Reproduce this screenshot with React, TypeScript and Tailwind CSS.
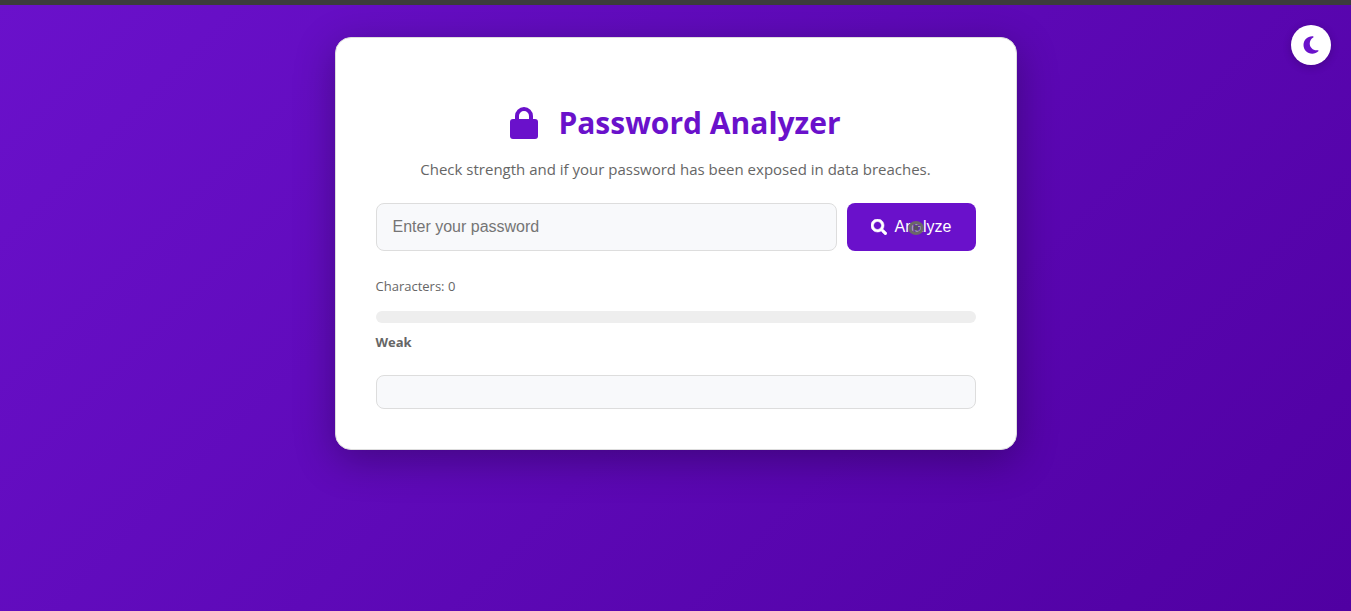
import { useState } from "react";
import { FaSearch } from "react-icons/fa";
import { FaMoon } from "react-icons/fa6";

function LockIcon() {
  return (
    <svg viewBox="0 0 28 32" aria-hidden="true" className="h-8 w-7" fill="currentColor">
      <path d="M7 13V9a7 7 0 0 1 14 0v4" fill="none" stroke="currentColor" strokeWidth="4" />
      <rect x="0" y="12" width="28" height="20" rx="3" />
    </svg>
  );
}

function PointerMark() {
  return (
    <svg
      viewBox="0 0 16 14"
      aria-hidden="true"
      className="pointer-events-none absolute top-[18px] left-[61px] h-[14px] w-4"
    >
      <ellipse cx="8" cy="7" rx="6.4" ry="5.4" fill="#5f5080" fillOpacity="0.55" stroke="#6b6868" strokeWidth="3" />
      <circle cx="8" cy="7" r="2.4" fill="#55505c" />
    </svg>
  );
}

export default function App() {
  const [password, setPassword] = useState("");

  return (
    <div className="flex min-h-screen flex-col bg-[linear-gradient(135deg,#6a11cb,#5000a2)] font-['Open_Sans','Noto_Sans',sans-serif] text-[#666666]">
      <div className="h-[5px] bg-[#3c3c3c]" />
      <button
        type="button"
        aria-label="Toggle dark mode"
        className="fixed top-[25px] right-5 flex size-10 items-center justify-center rounded-full bg-white text-[#6a11cb] shadow-[0_2px_8px_rgba(0,0,0,0.2)]"
      >
        <FaMoon className="h-5 w-4" />
      </button>

      <main className="mx-auto mt-8 w-full max-w-[682px] rounded-2xl border border-[#dddddd] bg-white px-10 pt-[60px] pb-10 shadow-[0_10px_40px_rgba(0,0,0,0.3)]">
        <h1 className="flex items-center justify-center gap-5 text-[30px] leading-[49px] font-bold text-[#6a11cb]">
          <LockIcon />
          Password Analyzer
        </h1>
        <p className="mt-[10px] text-center text-[15px] leading-6">
          Check strength and if your password has been exposed in data breaches.
        </p>

        <form
          className="mt-[22px] flex gap-[10px] font-['Liberation_Sans',sans-serif] text-base"
          onSubmit={(event) => event.preventDefault()}
        >
          <input
            type="password"
            aria-label="Password"
            placeholder="Enter your password"
            value={password}
            onChange={(event) => setPassword(event.target.value)}
            className="h-12 min-w-0 flex-1 rounded-lg border border-[#dddddd] bg-[#f8f9fb] px-4 text-[#333333] placeholder:text-[#757575]"
          />
          <button
            type="submit"
            className="relative flex h-12 w-[129px] items-center justify-center gap-2 rounded-lg bg-[#6a11cb] text-white"
          >
            <FaSearch className="size-4" stroke="currentColor" strokeWidth="18" />
            Analyze
            <PointerMark />
          </button>
        </form>

        <p className="mt-[23px] text-[13px] leading-6">Characters: {password.length}</p>
        <div className="mt-[13px] h-3 rounded-full bg-[#eeeeee]" />
        <p className="mt-[7px] text-[13px] leading-6 font-bold">Weak</p>
        <div className="mt-[21px] rounded-lg border border-[#dddddd] bg-[#f8f9fb] p-4" />
      </main>
    </div>
  );
}
